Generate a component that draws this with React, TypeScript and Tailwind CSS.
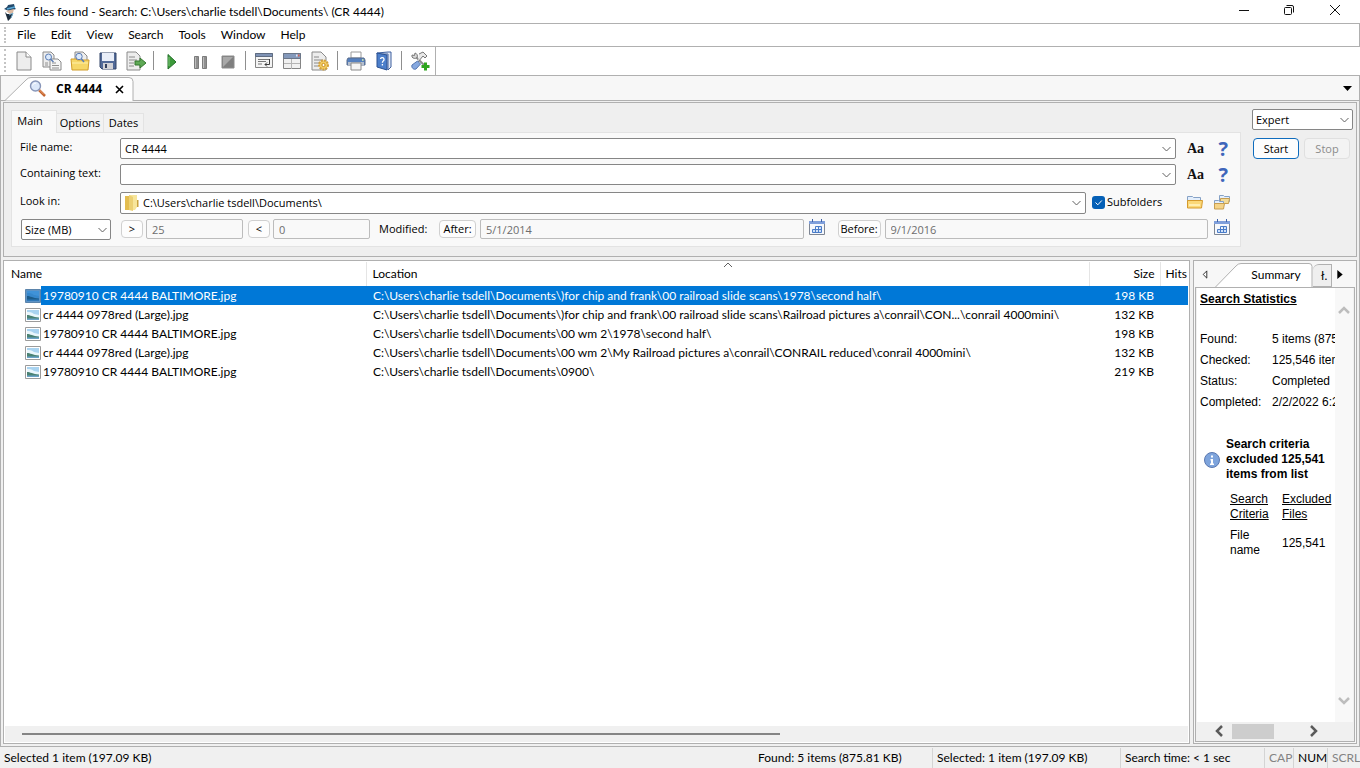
import { useState, type ReactNode } from "react";

const files = [
  { name: "19780910 CR 4444 BALTIMORE.jpg", location: "C:\\Users\\charlie tsdell\\Documents\\)for chip and frank\\00 railroad slide scans\\1978\\second half\\", size: "198 KB" },
  { name: "cr 4444 0978red (Large).jpg", location: "C:\\Users\\charlie tsdell\\Documents\\)for chip and frank\\00 railroad slide scans\\Railroad pictures a\\conrail\\CON...\\conrail 4000mini\\", size: "132 KB" },
  { name: "19780910 CR 4444 BALTIMORE.jpg", location: "C:\\Users\\charlie tsdell\\Documents\\00 wm 2\\1978\\second half\\", size: "198 KB" },
  { name: "cr 4444 0978red (Large).jpg", location: "C:\\Users\\charlie tsdell\\Documents\\00 wm 2\\My Railroad pictures a\\conrail\\CONRAIL reduced\\conrail 4000mini\\", size: "132 KB" },
  { name: "19780910 CR 4444 BALTIMORE.jpg", location: "C:\\Users\\charlie tsdell\\Documents\\0900\\", size: "219 KB" },
];

const stats = [
  ["Found:", "5 items (875.81 KB)"],
  ["Checked:", "125,546 items"],
  ["Status:", "Completed"],
  ["Completed:", "2/2/2022 6:22 PM"],
];

const menus = ["File", "Edit", "View", "Search", "Tools", "Window", "Help"];

function Icon({ children, className = "size-5" }: { children: ReactNode; className?: string }) {
  return (
    <svg viewBox="0 0 20 20" fill="none" className={`shrink-0 ${className}`} aria-hidden="true">
      {children}
    </svg>
  );
}

function Chevron() {
  return (
    <svg viewBox="0 0 9 6" className="h-[6px] w-[9px]" fill="none" stroke="#606060" aria-hidden="true">
      <path d="M.5 1l4 4 4-4" />
    </svg>
  );
}

function Page({ d = "M3 1h9l5 5v13H3z" }: { d?: string }) {
  return <path d={d} fill="#ededed" stroke="#8a8a8a" />;
}

const toolbar: { label: string; icon: ReactNode }[][] = [
  [
    {
      label: "New search",
      icon: (
        <>
          <Page />
          <path d="M12 1v5h5" fill="#fff" stroke="#8a8a8a" />
        </>
      ),
    },
    {
      label: "New from criteria",
      icon: (
        <>
          <Page d="M1 1h8l3 3v12H1z" />
          <path d="M8 8h8l3 3v8H8z" fill="#f6f6f6" stroke="#8a8a8a" />
          <path d="M10 12h4M10 14.5h7M10 17h7M3 12h3M3 14h3" stroke="#909090" />
          <circle cx="6.5" cy="6" r="3" fill="#dbe9fb" stroke="#5b7db5" />
          <path d="M8.5 8l3 3" stroke="#5b7db5" strokeWidth="1.5" />
        </>
      ),
    },
    {
      label: "Open",
      icon: (
        <>
          <Page d="M5 1h8l4 4v9H5z" />
          <path d="M1 8h5l1 1h12l-1 10H2z" fill="#f6d768" stroke="#d19d2b" />
          <path d="M2 12h16" stroke="#fff0aa" />
          <circle cx="9" cy="5.5" r="3.2" fill="#dbe9fb" stroke="#5b7db5" />
          <path d="M11.5 8l2.5 3" stroke="#5b7db5" strokeWidth="1.5" />
        </>
      ),
    },
    {
      label: "Save",
      icon: (
        <>
          <path d="M2 2h16v16H4l-2-2z" fill="#526a98" stroke="#334469" />
          <path d="M4 2h12v8H4z" fill="#e9eef8" />
          <path d="M5 12h10v6H5z" fill="#d2d2d6" />
          <path d="M7 13h2v4H7z" fill="#33415f" />
        </>
      ),
    },
    {
      label: "Export",
      icon: (
        <>
          <Page d="M1 1h9l4 4v14H1z" />
          <path d="M3 6h6M3 9h8M3 12h5M3 15h5" stroke="#8a8a8a" />
          <path d="M9 10h5V7l6 5-6 5v-3H9z" fill="#5fa956" stroke="#34762f" />
        </>
      ),
    },
  ],
  [
    {
      label: "Start",
      icon: (
        <>
          <path d="M6 3.500l8 7.500-8 7z" fill="#3c9a3a" stroke="#24702a" />
          <path d="M7 6v9" stroke="#7cc478" />
        </>
      ),
    },
    {
      label: "Pause",
      icon: (
        <>
          <path d="M4.500 5.500h4v12h-4zM12.500 5.500h4v12h-4z" fill="#8f8f8f" stroke="#7c7c7c" />
          <path d="M5.500 6v11M13.500 6v11" stroke="#bdbdbd" />
        </>
      ),
    },
    {
      label: "Stop",
      icon: (
        <>
          <path d="M4 5h12v12H4z" fill="#7f7f7f" stroke="#8c8c8c" />
          <path d="M5 6h10L5 16z" fill="#a8a8a8" />
        </>
      ),
    },
  ],
  [
    {
      label: "Results pane",
      icon: (
        <>
          <path d="M1.500 2.500h17v14h-17z" fill="#f4f4f4" stroke="#858585" />
          <path d="M1.500 2.500h17v3h-17z" fill="#7f93b5" stroke="#5f6c82" />
          <path d="M4 8.500h12M4 10.500h8M4 13h4" stroke="#777" />
          <path d="M15.500 8v5.500H11m2-2l-2 2 2 2" stroke="#3c3c3c" />
        </>
      ),
    },
    {
      label: "Window layout",
      icon: (
        <>
          <path d="M1.500 2.500h17v15h-17z" fill="#f1f1f1" stroke="#858585" />
          <path d="M1.500 2.500h17v5h-17z" fill="#8499bb" stroke="#6b7688" />
          <path d="M9.500 8v10M2 12.500h16" stroke="#b4b4b4" />
          <path d="M14 4.500h1.500" stroke="#dfe7f5" strokeWidth="2" />
          <path d="M16 4.500h1.500" stroke="#d6604c" strokeWidth="2" />
        </>
      ),
    },
    {
      label: "Configuration",
      icon: (
        <>
          <Page d="M2 1h9l5 5v13H2z" />
          <path d="M4 6h5M4 9h9M4 12h5M4 15h4" stroke="#8a8a8a" />
          <circle cx="13.5" cy="14" r="4.5" fill="#f3cd62" stroke="#d3a03a" strokeDasharray="2 1" strokeWidth="2" />
          <circle cx="13.5" cy="14" r="1.6" fill="#fff" stroke="#c98d1c" />
        </>
      ),
    },
  ],
  [
    {
      label: "Print",
      icon: (
        <>
          <path d="M5 1h10v6H5z" fill="#fff" stroke="#9a9a9a" />
          <path d="M2 7h16l1 2v5H1V9z" fill="#5580bf" stroke="#5b6d8b" />
          <path d="M2 11h16v3H2z" fill="#b5bfce" />
          <path d="M5 12h10v7H5z" fill="#f5f5f5" stroke="#8a8a8a" />
          <path d="M16 9h1.500" stroke="#dff5a3" strokeWidth="1.5" />
        </>
      ),
    },
    {
      label: "Help contents",
      icon: (
        <>
          <path d="M3 2l11-1h3v15l-3 3V3H3z" fill="#e3e9f4" stroke="#3c5f9f" />
          <path d="M3 2l10 2v15L3 16z" fill="#4c7fcb" stroke="#2a5191" />
          <path d="M6.500 8c.3-2.200 4-1.500 3.500.8-.3 1.200-1.500 1.200-1.600 3M8.400 13v1.500" stroke="#fff" strokeWidth="1.300" />
        </>
      ),
    },
  ],
  [
    {
      label: "Customize tools",
      icon: (
        <>
          <path d="M6 6l10 10" stroke="#8c8c8c" strokeWidth="2" />
          <path d="M2 4l2.500.5L5 2c2 .5 3 2.500 2 4.500C5.500 8 3 7.500 2 6z" fill="#d9d9d9" stroke="#777" />
          <path d="M9 3l4-2 4 4-2 2-2-2-5 6" fill="#e8e8e8" stroke="#777" />
          <path d="M7.500 10l3 3-4.500 5c-2 1-5-1-4-4z" fill="#87a9e0" stroke="#5577b1" />
          <path d="M15.500 11.500v8M11.500 15.500h8" stroke="#2fa51f" strokeWidth="3" />
        </>
      ),
    },
  ],
];

function Grip() {
  return <div className="ml-1 w-px self-stretch border-l-2 border-dotted border-[#c4c4c4]" />;
}

function ComboBox({ id, value, className = "", icon }: { id: string; value: string; className?: string; icon?: ReactNode }) {
  const [text, setText] = useState(value);
  return (
    <div className={`flex min-w-0 flex-1 items-center rounded-[2px] border border-[#868686] bg-white pl-1 ${className}`}>
      {icon}
      <input id={id} value={text} onChange={(e) => setText(e.target.value)} className="min-w-0 flex-1 bg-transparent outline-none" />
      <button type="button" aria-label="Show history" className="px-1">
        <Chevron />
      </button>
    </div>
  );
}

function Select({ label, options, className }: { label: string; options: string[]; className: string }) {
  return (
    <div className={`relative flex h-[21px] shrink-0 ${className}`}>
      <select aria-label={label} className="w-full appearance-none rounded-[2px] border border-[#868686] bg-white pl-[3px] outline-none">
        {options.map((o) => (
          <option key={o}>{o}</option>
        ))}
      </select>
      <span className="pointer-events-none absolute top-2 right-1">
        <Chevron />
      </span>
    </div>
  );
}

function DisabledField({ label, value, className }: { label: string; value: string; className: string }) {
  return (
    <input aria-label={label} defaultValue={value} disabled className={`h-[20px] min-w-0 rounded-[2px] border border-[#bcbcbc] bg-[#f9f9f9] px-[5px] text-[#6d6d6d] ${className}`} />
  );
}

function SmallButton({ children, className = "" }: { children: ReactNode; className?: string }) {
  return (
    <button type="button" className={`mt-px h-[18px] shrink-0 rounded-[4px] border border-[#d0d0d0] bg-[#fdfdfd] text-center leading-4 ${className}`}>
      {children}
    </button>
  );
}

function CalendarButton({ label }: { label: string }) {
  return (
    <button type="button" aria-label={label} className="shrink-0">
      <svg viewBox="0 0 16 16" className="size-4" fill="none" aria-hidden="true">
        <path d="M.5 2.500h15v13H.5z" fill="#f6f8fc" stroke="#7e8694" />
        <path d="M0 2h16v3H0z" fill="#7f9fdb" />
        <path d="M3.500 0v3M12.500 0v3" stroke="#3f62a8" />
        <path d="M6.500 7.500h6v6h-9v-3h9M6.500 7.500v6M9.500 7.500v6" stroke="#4a7cc8" fill="#cfe0f7" />
      </svg>
    </button>
  );
}

function MatchButtons() {
  return (
    <div className="ml-[11px] flex w-[51px] shrink-0 items-center justify-between pr-[10px]">
      <button type="button" aria-label="Match case" className="font-['Liberation_Serif',serif] text-[14px] leading-5 font-bold text-[#111]">
        Aa
      </button>
      <button type="button" aria-label="Expression help" className="font-['Open_Sans',sans-serif] text-[20px] leading-5 font-bold text-[#3f66bb]">
        ?
      </button>
    </div>
  );
}

function Magnifier() {
  return (
    <svg viewBox="0 0 18 18" className="size-[18px]" fill="none" aria-hidden="true">
      <path d="M10 10l6 6" stroke="#c2622c" strokeWidth="2.500" />
      <path d="M10 9.500l5 5" stroke="#f0a271" />
      <circle cx="6.500" cy="6" r="5" fill="#dce8fa" stroke="#8795b8" strokeWidth="1.400" />
      <path d="M3.500 5.500c.5-1.500 2-2.500 3.500-2.300" stroke="#fff" />
    </svg>
  );
}

function ImageIcon({ selected }: { selected: boolean }) {
  return (
    <svg viewBox="0 0 16 14" className="h-[14px] w-4 shrink-0" fill="none" aria-hidden="true">
      <path d="M.5.5h15v13H.5z" fill={selected ? "#5d93c6" : "#fff"} stroke={selected ? "#5b84ab" : "#9b9b9b"} />
      <path d="M2 2h12v10H2z" fill={selected ? "#3f92d8" : "#a9d3f0"} />
      <path d="M2 4c3 0 4 0 7 2l5 1v3H2z" fill={selected ? "#3687cc" : "#e9f6fc"} />
      <path d="M2 7c3 0 6 2 12 2.500V11H2z" fill={selected ? "#1b5b8a" : "#4a8273"} />
      <path d="M2 10.500h12V12H2z" fill={selected ? "#2f78b8" : "#6ba3c8"} />
    </svg>
  );
}

function TitleBar() {
  return (
    <header className="flex h-[23px] items-center bg-white">
      <svg viewBox="0 0 16 18" className="ml-[2px] h-[18px] w-4" fill="none" aria-hidden="true">
        <path d="M2 6c1-1 3-1 4-4l6-1 1 4 1 1-7 2z" fill="#244a6b" />
        <path d="M5 6l8-2" stroke="#58a9d8" strokeWidth="1.500" />
        <path d="M4 8l8-2-1 4-3 1z" fill="#dcb9a0" />
        <path d="M3 9l2 2h6l-2 4-3 3-1-3z" fill="#1c2c3c" />
        <path d="M7 12l4-2-2 5" stroke="#6fa7c8" />
      </svg>
      <h1 className="ml-[5px] flex-1">5 files found - Search: C:\Users\charlie tsdell\Documents\ (CR 4444)</h1>
      <div className="flex self-start py-1">
        <button type="button" aria-label="Minimize" className="flex w-[45px] justify-center">
          <svg viewBox="0 0 12 12" className="size-3" stroke="#111" aria-hidden="true">
            <path d="M1 6.500h10" />
          </svg>
        </button>
        <button type="button" aria-label="Restore" className="flex w-[45px] justify-center">
          <svg viewBox="0 0 12 12" className="size-3" stroke="#111" fill="none" aria-hidden="true">
            <rect x="1.500" y="3.500" width="7" height="7" rx="1" />
            <path d="M3.500 1.500h5.500a1.500 1.500 0 011.500 1.500v5.500" />
          </svg>
        </button>
        <button type="button" aria-label="Close" className="mr-[2px] flex w-[47px] justify-center">
          <svg viewBox="0 0 12 12" className="size-3" stroke="#111" aria-hidden="true">
            <path d="M1 1l10 10M11 1L1 11" />
          </svg>
        </button>
      </div>
    </header>
  );
}

function CriteriaPanel() {
  return (
    <section className="flex border border-[#b0b0b0] bg-[#efefef] pt-[6px] pr-[3px] pb-[9px] pl-[7px] font-['Open_Sans',sans-serif] text-[11px]">
      <div className="min-w-0 flex-1 pt-px">
        <div className="flex items-end" role="tablist">
          <button type="button" role="tab" aria-selected="true" className="-mb-px h-[23px] w-[46px] border border-b-0 border-[#e3e3e3] bg-[#f9f9f9] pr-2 pb-[3px]">
            Main
          </button>
          <button type="button" role="tab" aria-selected="false" className="h-[19px] w-[47px] border border-b-0 border-l-0 border-[#e3e3e3] bg-[#f2f2f2]">
            Options
          </button>
          <button type="button" role="tab" aria-selected="false" className="h-[19px] w-[40px] border border-b-0 border-l-0 border-[#e3e3e3] bg-[#f2f2f2]">
            Dates
          </button>
        </div>
        <div className="flex flex-col border border-[#e3e3e3] bg-[#f9f9f9] pt-[5px] pr-[2px] pb-[6px] pl-2">
          <div className="flex h-[21px]">
            <label htmlFor="file-name" className="w-[100px] shrink-0 pt-px">
              File name:
            </label>
            <ComboBox id="file-name" value="CR 4444" />
            <MatchButtons />
          </div>
          <div className="mt-[5px] flex h-[21px]">
            <label htmlFor="containing" className="w-[100px] shrink-0 pt-px">
              Containing text:
            </label>
            <ComboBox id="containing" value="" />
            <MatchButtons />
          </div>
          <div className="mt-[7px] flex h-[22px]">
            <label htmlFor="look-in" className="w-[100px] shrink-0 pt-px">
              Look in:
            </label>
            <ComboBox
              id="look-in"
              value={"C:\\Users\\charlie tsdell\\Documents\\"}
              icon={
                <svg viewBox="0 0 14 16" className="mr-1 h-4 w-[14px] shrink-0" aria-hidden="true">
                  <path d="M0 1h5v14H0z" fill="#e3bd50" />
                  <path d="M4 0h8v12l-2 3H4z" fill="#f7e59a" />
                  <path d="M4 0l4 2v14l-4-1z" fill="#ecd073" />
                  <path d="M12 5h1.500v7H12z" fill="#c9a13c" />
                </svg>
              }
            />
            <label className="ml-[6px] flex h-5 w-[95px] shrink-0 items-center gap-[2px]">
              <span className="relative flex size-[13px]">
                <input type="checkbox" defaultChecked className="size-[13px] appearance-none rounded-[3px] bg-[#0560b6]" />
                <svg viewBox="0 0 13 13" className="pointer-events-none absolute inset-0" fill="none" stroke="#fff" aria-hidden="true">
                  <path d="M3.500 6.500l2.300 2.300 4-4.300" />
                </svg>
              </span>
              Subfolders
            </label>
            <div className="flex h-5 w-[51px] shrink-0 items-center justify-between pr-2">
              <button type="button" aria-label="Browse folder">
                <svg viewBox="0 0 16 16" className="size-4" aria-hidden="true">
                  <path d="M.5 2.500h5l1 1h7v4H.5z" fill="#e4effc" stroke="#86a2c6" />
                  <path d="M.5 6.500h15l-1 7.500H.5z" fill="#fbd878" stroke="#d59a2c" />
                  <path d="M2 11h11" stroke="#ffeeb0" strokeWidth="2" />
                </svg>
              </button>
              <button type="button" aria-label="Browse several folders">
                <svg viewBox="0 0 16 16" className="size-4" aria-hidden="true">
                  <path d="M5.500 1.500h4l1 1h5v5h-10z" fill="#e4effc" stroke="#86a2c6" />
                  <path d="M6.500 4.500h9l-1 5h-8z" fill="#f3dc9a" stroke="#c79e50" />
                  <path d="M.5 6.500h4l1 1h4v3h-9z" fill="#e4effc" stroke="#86a2c6" />
                  <path d="M.5 9.500h10l-1 5.500H.5z" fill="#f5d488" stroke="#c79e50" />
                </svg>
              </button>
            </div>
          </div>
          <div className="mt-[5px] flex h-[21px] items-start">
            <Select label="Size unit" options={["Size (MB)", "Size (KB)"]} className="ml-px w-[90px]" />
            <SmallButton className="ml-[10px] w-[22px]">&gt;</SmallButton>
            <DisabledField label="Larger than" value="25" className="ml-[3px] w-[97px]" />
            <SmallButton className="ml-[5px] w-[22px]">&lt;</SmallButton>
            <DisabledField label="Smaller than" value="0" className="ml-[3px] w-[97px]" />
            <span className="ml-[9px] w-[60px] shrink-0 leading-5">Modified:</span>
            <SmallButton className="w-[37px]">After:</SmallButton>
            <DisabledField label="Modified after" value="5/1/2014" className="mr-[5px] ml-1 flex-1" />
            <CalendarButton label="Pick start date" />
            <SmallButton className="ml-[13px] w-[43px]">Before:</SmallButton>
            <DisabledField label="Modified before" value="9/1/2016" className="mr-[6px] ml-1 flex-1" />
            <span className="pr-2">
              <CalendarButton label="Pick end date" />
            </span>
          </div>
        </div>
      </div>
      <div className="ml-[11px] w-[101px] shrink-0">
        <Select label="Mode" options={["Expert", "Basic"]} className="w-[101px]" />
        <div className="mt-2 flex gap-[5px] pl-px">
          <button type="button" className="h-[21px] w-[46px] rounded-[4px] border border-[#0f6cbd] bg-[#fdfdfd]">
            Start
          </button>
          <button type="button" disabled className="h-[21px] w-[46px] rounded-[4px] border border-[#e0e0e0] bg-[#f3f3f3] text-[#8b8b8b]">
            Stop
          </button>
        </div>
      </div>
    </section>
  );
}

function Results() {
  const [selected, setSelected] = useState(0);
  return (
    <section className="flex min-w-0 flex-1 flex-col border border-[#b0b0b0] bg-white p-px">
      <table className="w-full table-fixed border-collapse text-left">
        <colgroup>
          <col className="w-[361px]" />
          <col />
          <col className="w-[71px]" />
          <col className="w-[28px]" />
        </colgroup>
        <thead>
          <tr className="h-6">
            <th className="border-r border-[#e5e5e5] pl-[6px] font-normal">Name</th>
            <th className="relative border-r border-[#e5e5e5] pl-[6px] font-normal">
              Location
              <svg viewBox="0 0 9 6" className="absolute top-0 left-1/2 h-[6px] w-[9px] -translate-x-1/2" fill="none" stroke="#606060" aria-hidden="true">
                <path d="M.5 5l4-4 4 4" />
              </svg>
            </th>
            <th className="border-r border-[#e5e5e5] pr-[5px] text-right font-normal">Size</th>
            <th className="pl-[5px] font-normal">Hits</th>
          </tr>
        </thead>
        <tbody>
          {files.map((f, i) => {
            const on = i === selected;
            const cell = on ? "bg-[#0078d7] text-white" : "";
            return (
              <tr key={i} onClick={() => setSelected(i)} className="h-[19px] whitespace-nowrap">
                <td className="p-0">
                  <div className="flex h-[19px] items-center pl-5">
                    <ImageIcon selected={on} />
                    <span className={`flex-1 self-stretch pl-[2px] leading-5 ${cell}`}>{f.name}</span>
                  </div>
                </td>
                <td className={`truncate p-0 pl-[7px] ${cell}`}>{f.location}</td>
                <td className={`p-0 pr-[6px] text-right ${cell}`}>{f.size}</td>
                <td className={cell} />
              </tr>
            );
          })}
        </tbody>
      </table>
      <div className="flex-1" />
      <div className="h-4 bg-[#f0f0f0] pt-[7px] pl-[17px]">
        <div className="h-[2px] w-[65%] bg-[#858585]" />
      </div>
    </section>
  );
}

function SummaryPane() {
  return (
    <aside className="flex w-[164px] shrink-0 flex-col border border-[#b0b0b0] bg-[#f7f7f7] p-px">
      <div className="relative flex h-[25px] items-end">
        <button type="button" aria-label="Scroll tabs left" className="flex w-5 justify-center self-center">
          <svg viewBox="0 0 6 10" className="h-[9px] w-[6px]" fill="#fff" stroke="#222" aria-hidden="true">
            <path d="M5 1v8L1 5z" />
          </svg>
        </button>
        <button type="button" role="tab" aria-selected="true" className="relative h-6 w-[98px] pl-6">
          <svg viewBox="0 0 98 24" className="absolute inset-0 h-6 w-[98px]" aria-hidden="true">
            <path d="M.5 24L21 3Q23 .5 26 .5h68q3 0 3 3V24" fill="#fff" stroke="#b0b0b0" />
          </svg>
          <span className="relative">Summary</span>
        </button>
        <button type="button" role="tab" aria-selected="false" aria-label="History" className="h-[23px] w-[19px] rounded-tl-md border border-l-0 border-[#b0b0b0] bg-[#efefef] pl-1">
          ł.
        </button>
        <button type="button" aria-label="Scroll tabs right" className="flex w-[15px] justify-center self-center">
          <svg viewBox="0 0 6 10" className="h-[9px] w-[6px]" fill="#000" aria-hidden="true">
            <path d="M0 0v10l6-5z" />
          </svg>
        </button>
      </div>
      <div className="flex min-h-0 flex-1 flex-col border border-[#b0b0b0] bg-[#f0f0f0] px-px pb-px">
        <div className="flex min-h-0 flex-1">
          <div className="min-w-0 flex-1 overflow-hidden bg-white pt-1 pl-[3px] font-['Liberation_Sans',Arial,sans-serif] leading-[15px]">
            <h2 className="font-bold underline">Search Statistics</h2>
            <table className="mt-[22px] w-[240px] table-fixed whitespace-nowrap">
              <tbody>
                {stats.map(([k, v]) => (
                  <tr key={k} className="h-[21px]">
                    <td className="w-[72px] p-0">{k}</td>
                    <td className="p-0">{v}</td>
                  </tr>
                ))}
              </tbody>
            </table>
            <div className="mt-6 flex items-center gap-[6px] pl-1">
              <svg viewBox="0 0 16 16" className="size-4 shrink-0" aria-hidden="true">
                <circle cx="8" cy="8" r="7.500" fill="#7ea4dc" stroke="#5a78b0" />
                <path d="M6.500 7H9v4.500h1V13H6v-1.500h1V8.500h-.5zM7 3.500h2v2H7z" fill="#fff" />
              </svg>
              <h3 className="font-bold whitespace-nowrap">
                Search criteria
                <br />
                excluded 125,541
                <br />
                items from list
              </h3>
            </div>
            <table className="mt-[10px] ml-[30px] w-[104px] table-fixed text-left">
              <thead>
                <tr className="align-top underline">
                  <th className="w-[52px] p-0 font-normal">
                    Search
                    <br />
                    Criteria
                  </th>
                  <th className="p-0 font-normal">
                    Excluded
                    <br />
                    Files
                  </th>
                </tr>
              </thead>
              <tbody>
                <tr className="h-[42px]">
                  <td className="p-0">
                    File
                    <br />
                    name
                  </td>
                  <td className="p-0">125,541</td>
                </tr>
              </tbody>
            </table>
          </div>
          <div className="flex w-[18px] flex-col items-center justify-between bg-[#f8f8f8] pt-[17px] pr-px pb-[16px]">
            <svg viewBox="0 0 12 9" className="h-[9px] w-3" fill="none" stroke="#bdbdbd" strokeWidth="2.500" aria-hidden="true">
              <path d="M1 8l5-5 5 5" />
            </svg>
            <svg viewBox="0 0 12 9" className="h-[9px] w-3" fill="none" stroke="#bdbdbd" strokeWidth="2.500" aria-hidden="true">
              <path d="M1 1l5 5 5-5" />
            </svg>
          </div>
        </div>
        <div className="flex h-[18px] items-center px-[17px]">
          <svg viewBox="0 0 9 12" className="h-3 w-[9px]" fill="none" stroke="#5a5a5a" strokeWidth="2.500" aria-hidden="true">
            <path d="M8 1L3 6l5 5" />
          </svg>
          <div className="ml-[9px] h-[15px] w-[42px] bg-[#cdcdcd]" />
          <svg viewBox="0 0 9 12" className="mr-[17px] ml-auto h-3 w-[9px]" fill="none" stroke="#5a5a5a" strokeWidth="2.500" aria-hidden="true">
            <path d="M1 1l5 5-5 5" />
          </svg>
        </div>
      </div>
    </aside>
  );
}

function StatusBar() {
  return (
    <footer className="flex h-[21px] items-center bg-[#f0f0f0] pl-1 leading-5 whitespace-nowrap">
      <span className="flex-1">Selected 1 item (197.09 KB)</span>
      <span className="w-[174px]">Found: 5 items (875.81 KB)</span>
      <span className="w-[188px] border-l border-[#d4d4d4] pl-1">Selected: 1 item (197.09 KB)</span>
      <span className="w-[144px] border-l border-[#d4d4d4] pl-1">Search time: &lt; 1 sec</span>
      <span className="w-[29px] border-l border-[#d4d4d4] pl-1 text-[#838383]">CAP</span>
      <span className="w-[34px] border-l border-[#d4d4d4] pl-1">NUM</span>
      <span className="w-[33px] border-l border-[#d4d4d4] pl-1 text-[#838383]">SCRL</span>
    </footer>
  );
}

export default function App() {
  return (
    <div className="flex h-screen flex-col overflow-hidden bg-[#f0f0f0] font-[Lato,sans-serif] text-[12px] leading-4 text-black">
      <TitleBar />
      <nav className="flex h-6 items-center border border-l-0 border-[#b0b0b0] bg-white py-[3px]">
        <Grip />
        <div className="ml-[11px] flex gap-[15px]">
          {menus.map((m) => (
            <button key={m} type="button">
              {m}
            </button>
          ))}
        </div>
      </nav>
      <div className="flex h-[29px] border-b border-[#b0b0b0] bg-white">
        <div className="flex items-center border-r border-[#b0b0b0] pt-[2px] pr-[5px] pb-[3px]">
          <Grip />
          <div className="ml-[8px] flex items-center gap-[7px]">
            {toolbar.map((group, g) => (
              <div key={g} className="flex items-center gap-2">
                {g > 0 && <div className="h-[19px] w-px bg-[#8f8f8f]" />}
                {group.map((b) => (
                  <button key={b.label} type="button" aria-label={b.label}>
                    <Icon>{b.icon}</Icon>
                  </button>
                ))}
              </div>
            ))}
          </div>
        </div>
      </div>
      <main className="flex min-h-0 flex-1 flex-col border-x border-b border-[#b0b0b0]">
        <div className="flex h-[25px] items-end border-b border-[#b0b0b0] bg-[#f7f7f7] pl-1">
          <div className="relative -mb-px flex h-6 w-[129px] items-center pl-6">
            <svg viewBox="0 0 129 24" className="absolute inset-0 h-6 w-[129px]" aria-hidden="true">
              <path d="M0 23.500L21 3Q23 .5 26 .5h98q4 0 4 4V24" fill="#fff" stroke="#b0b0b0" />
            </svg>
            <span className="relative flex items-center">
              <Magnifier />
              <span className="ml-[9px] font-['Open_Sans',sans-serif] font-bold">CR 4444</span>
              <button type="button" aria-label="Close tab" className="ml-[13px]">
                <svg viewBox="0 0 9 9" className="size-[9px]" stroke="#000" strokeWidth="1.600" aria-hidden="true">
                  <path d="M1 1l7 7M8 1L1 8" />
                </svg>
              </button>
            </span>
          </div>
          <button type="button" aria-label="List tabs" className="mr-[7px] mb-[9px] ml-auto">
            <svg viewBox="0 0 9 5" className="h-[5px] w-[9px]" aria-hidden="true">
              <path d="M0 0h9L4.500 5z" />
            </svg>
          </button>
        </div>
        <div className="flex min-h-0 flex-1 flex-col gap-[3px] p-[2px] pt-px">
          <CriteriaPanel />
          <div className="flex min-h-0 flex-1 gap-[3px]">
            <Results />
            <SummaryPane />
          </div>
        </div>
      </main>
      <StatusBar />
    </div>
  );
}
